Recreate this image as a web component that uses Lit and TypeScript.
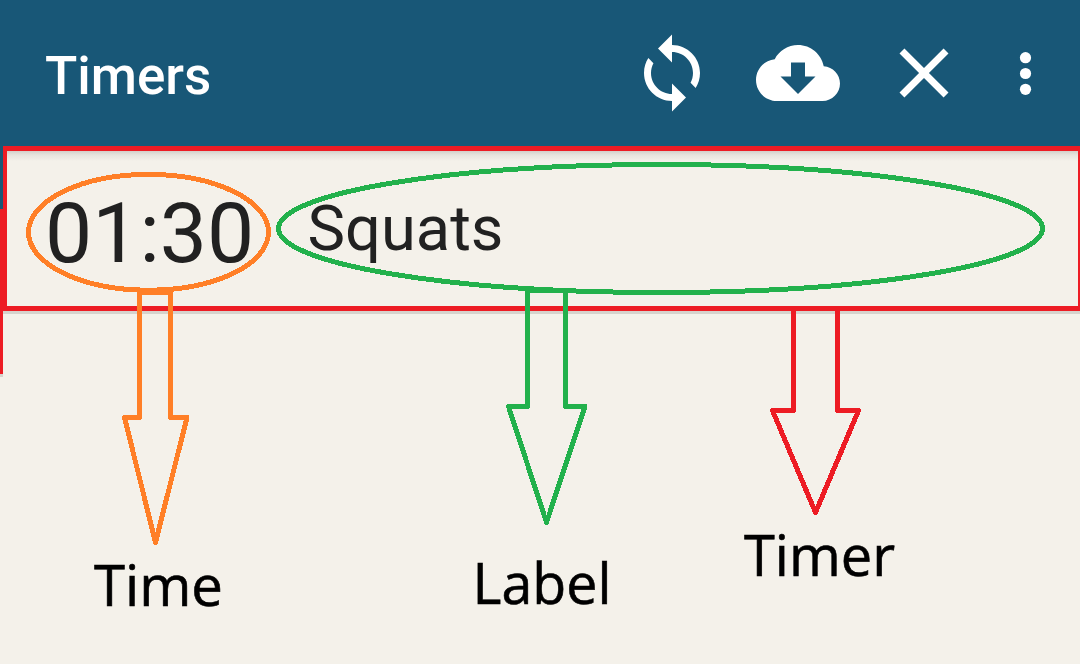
import { LitElement, html, css, svg } from "lit";
import { customElement } from "lit/decorators.js";

interface Callout {
  name: string;
  color: string;
  arrow: string;
  x: number;
  y: number;
  width: number;
}

const CALLOUTS: Callout[] = [
  { name: "Timer", color: "#ed1c24", arrow: "M793.5 308.5H837.5V410.5H858.5L815.5 512.5L772.5 410.5H793.5Z", x: 744, y: 575.5, width: 151 },
  { name: "Time", color: "#ff7f27", arrow: "M139.5 292.5H170.5V417.5H187L155.5 542.5L124.5 417.5H139.5Z", x: 94, y: 605.5, width: 129 },
  { name: "Label", color: "#22b14c", arrow: "M527.5 290.5H565.5V406.5H585L546.5 522.5L508.5 406.5H527.5Z", x: 472.5, y: 603.5, width: 139 },
];

@customElement("app-bar")
class AppBar extends LitElement {
  static styles = css`
    :host { display: block; }
    .bar {
      height: 146px;
      box-sizing: border-box;
      padding-left: 45px;
      display: flex;
      align-items: center;
      background: #185777;
      color: #fff;
    }
    .title {
      flex: 1;
      font: 500 53px/62px Roboto, sans-serif;
      padding-top: 6px;
    }
    .actions { display: flex; gap: 42px; }
    .icon { width: 84px; height: 84px; fill: #fff; display: block; }
    .more { width: 35px; height: 84px; fill: #fff; display: block; margin-right: 37px; }
  `;
  render() {
    return html`
      <header class="bar">
        <div class="title">Timers</div>
        <div class="actions">
          <svg class="icon" viewBox="0 0 24 24"><path d="M12 4V1L8 5l4 4V6c3.31 0 6 2.69 6 6 0 1.01-.25 1.97-.7 2.8l1.46 1.46C19.54 15.03 20 13.57 20 12c0-4.42-3.58-8-8-8zm0 14c-3.31 0-6-2.69-6-6 0-1.01.25-1.97.7-2.8L5.24 7.74C4.46 8.97 4 10.43 4 12c0 4.42 3.58 8 8 8v3l4-4-4-4v3z"/></svg>
          <svg class="icon" viewBox="0 0 24 24"><path d="M19.35 10.04C18.67 6.59 15.64 4 12 4 9.11 4 6.6 5.64 5.35 8.04 2.34 8.36 0 10.91 0 14c0 3.31 2.69 6 6 6h13c2.76 0 5-2.24 5-5 0-2.64-2.05-4.78-4.65-4.96zM17 13l-5 5-5-5h3V9h4v4h3z"/></svg>
          <svg class="icon" viewBox="0 0 24 24"><path d="M19 6.41L17.59 5 12 10.59 6.41 5 5 6.41 10.59 12 5 17.59 6.41 19 12 13.41 17.59 19 19 17.59 13.41 12z"/></svg>
          <svg class="more" viewBox="0 0 35 84">
            <circle cx="17.5" cy="26.7" r="5.6"/><circle cx="17.5" cy="42.5" r="5.6"/><circle cx="17.5" cy="58.3" r="5.6"/>
          </svg>
        </div>
      </header>
    `;
  }
}

@customElement("timer-row")
class TimerRow extends LitElement {
  static styles = css`
    :host { display: block; }
    .wrap { display: flex; height: 168px; }
    .edge {
      width: 3px;
      height: 231px;
      flex: none;
      background: linear-gradient(#185777 63px, #ed1c24 63px 228px, #d6d3cd 228px);
    }
    .row {
      flex: 1;
      height: 165px;
      box-sizing: border-box;
      border: 5px solid #ed1c24;
      border-left-width: 4px;
      border-right-width: 2px;
      padding-left: 38px;
      display: flex;
      align-items: flex-start;
      color: #212121;
      font-family: Roboto, sans-serif;
      background: linear-gradient(#d3d0ca, #e7e4dd 4px, #f4f1ea 10px);
      box-shadow: 0 3px 0 #d6d3cd;
    }
    .time { font-size: 84px; line-height: 165px; width: 262.5px; }
    .label { font-size: 63.2px; line-height: 155px; }
  `;
  render() {
    return html`
      <div class="wrap">
        <div class="edge"></div>
        <div class="row"><span class="time">01:30</span><span class="label">Squats</span></div>
      </div>
    `;
  }
}

@customElement("app-root")
class AppRoot extends LitElement {
  static styles = css`
    :host {
      display: block;
      position: relative;
      width: 1080px;
      height: 664px;
      overflow: hidden;
      background: #f4f1ea;
    }
    .notes { position: absolute; inset: 0; width: 1080px; height: 664px; }
    .mark { fill: none; stroke-width: 5; stroke-linejoin: round; shape-rendering: crispEdges; }
    .caption { font: 56px "Open Sans", "Noto Sans", sans-serif; fill: #000; stroke: #000; stroke-width: 0.6; }
  `;
  render() {
    return html`
      <app-bar></app-bar>
      <timer-row></timer-row>
      <svg class="notes" viewBox="0 0 1080 664">
        <ellipse class="mark" stroke="#ff7f27" cx="148.5" cy="232.3" rx="120" ry="57.9"/>
        <ellipse class="mark" stroke="#22b14c" cx="660.5" cy="228.5" rx="382" ry="64"/>
        ${CALLOUTS.map((c) => svg`
          <path class="mark" stroke=${c.color} d=${c.arrow}/>
          <text class="caption" x=${c.x} y=${c.y} textLength=${c.width} lengthAdjust="spacingAndGlyphs">${c.name}</text>
        `)}
      </svg>
    `;
  }
}
